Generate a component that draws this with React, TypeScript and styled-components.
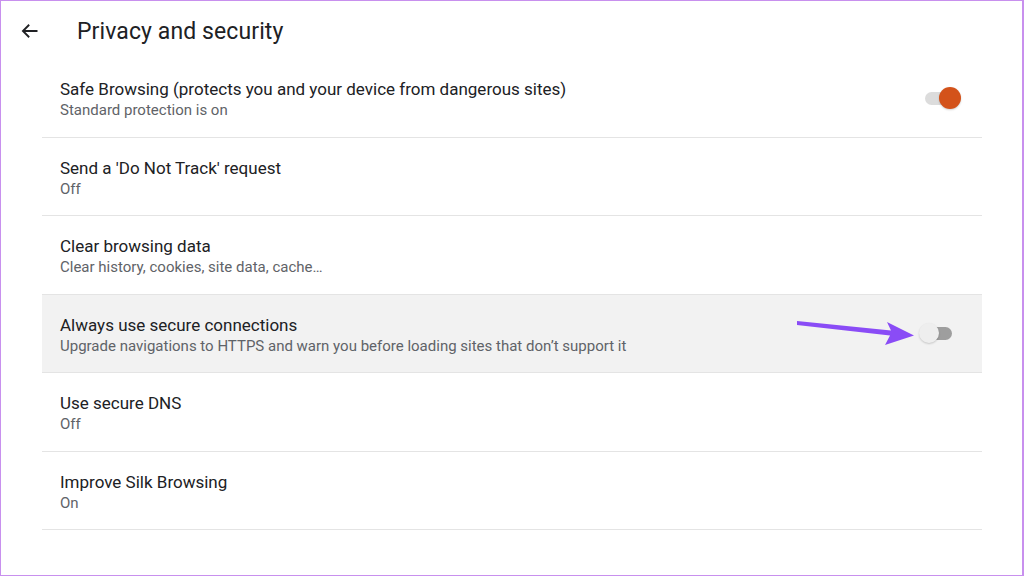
import styled, { createGlobalStyle } from 'styled-components';

const GlobalStyle = createGlobalStyle`
    html, body {
        margin: 0;
        padding: 0;
        background: #ffffff;
    }

    body {
        font-family: Roboto, "Liberation Sans", sans-serif;
        color: #202124;
    }
`;

const Frame = styled.div`
    position: relative;
    box-sizing: border-box;
    width: 1024px;
    height: 576px;
    border: 1px solid #c890ee;
    border-right-width: 2px;
    background: #ffffff;
    overflow: hidden;
`;

const Toolbar = styled.header`
    display: flex;
    align-items: center;
    box-sizing: border-box;
    height: 58px;
    padding: 2px 0 0 18px;
    gap: 36px;
`;

const BackButton = styled.button`
    display: flex;
    align-items: center;
    justify-content: center;
    width: 22px;
    height: 22px;
    padding: 0;
    border: none;
    background: none;
    color: #202124;
`;

const Title = styled.h1`
    margin: 0;
    font-size: 23px;
    font-weight: 400;
    letter-spacing: 0.1px;
    color: #202124;
`;

const List = styled.ul`
    list-style: none;
    margin: 0 0 0 41px;
    padding: 0;
    width: 940px;
`;

const Row = styled.li<{ $highlight?: boolean }>`
    display: flex;
    align-items: center;
    box-sizing: border-box;
    height: 78.5px;
    padding: 0 21px 0 18px;
    border-bottom: 1px solid #e4e4e4;
    background: ${({ $highlight }) => ($highlight ? '#f2f2f2' : 'transparent')};
`;

const RowText = styled.div`
    flex: 1;
    display: flex;
    flex-direction: column;
    padding-top: 5px;
`;

const RowTitle = styled.span`
    font-size: 17px;
    line-height: 21px;
    color: #202124;
`;

const RowSub = styled.span`
    font-size: 15px;
    line-height: 21px;
    color: #5f6368;
`;

const Switch = styled.div<{ $on?: boolean }>`
    position: relative;
    width: 36px;
    height: 22px;
    margin-right: ${({ $on }) => ($on ? '0' : '6px')};

    &::before {
        content: '';
        position: absolute;
        top: 5px;
        left: ${({ $on }) => ($on ? '0' : '3px')};
        width: 30px;
        height: 13px;
        border-radius: 7px;
        background: ${({ $on }) => ($on ? '#dcdcdc' : '#9e9e9e')};
    }

    &::after {
        content: '';
        position: absolute;
        top: ${({ $on }) => ($on ? '0' : '1px')};
        left: ${({ $on }) => ($on ? '14px' : '0')};
        width: ${({ $on }) => ($on ? '22px' : '20px')};
        height: ${({ $on }) => ($on ? '22px' : '20px')};
        border-radius: 50%;
        background: ${({ $on }) => ($on ? '#d3521a' : '#eeeeee')};
        box-shadow: 0 1px 2px rgba(0, 0, 0, 0.18);
    }
`;

const Pointer = styled.svg`
    position: absolute;
    left: 794px;
    top: 317px;
`;

const rows = [
    { title: 'Safe Browsing (protects you and your device from dangerous sites)', sub: 'Standard protection is on', toggle: 'on' },
    { title: "Send a 'Do Not Track' request", sub: 'Off' },
    { title: 'Clear browsing data', sub: 'Clear history, cookies, site data, cache…' },
    {
        title: 'Always use secure connections',
        sub: 'Upgrade navigations to HTTPS and warn you before loading sites that don’t support it',
        toggle: 'off',
        highlight: true,
    },
    { title: 'Use secure DNS', sub: 'Off' },
    { title: 'Improve Silk Browsing', sub: 'On' },
];

const App = (): JSX.Element => (
    <>
        <GlobalStyle />
        <Frame>
            <Toolbar>
                <BackButton aria-label="Back">
                    <svg width="20" height="20" viewBox="0 0 24 24" fill="none">
                        <path d="M21 12H4M11 4.5L3.5 12L11 19.5" stroke="#202124" strokeWidth="2.2" />
                    </svg>
                </BackButton>
                <Title>Privacy and security</Title>
            </Toolbar>
            <List>
                {rows.map((row) => (
                    <Row key={row.title} $highlight={row.highlight}>
                        <RowText>
                            <RowTitle>{row.title}</RowTitle>
                            <RowSub>{row.sub}</RowSub>
                        </RowText>
                        {row.toggle && <Switch $on={row.toggle === 'on'} />}
                    </Row>
                ))}
            </List>
            <Pointer width="124" height="32" viewBox="0 0 124 32">
                <path d="M2 3 L96 12.5 L92 4 L119 17.5 L90 27 L95 17.5 L2 7 Z" fill="#8a4cf6" />
            </Pointer>
        </Frame>
    </>
);

export default App;
